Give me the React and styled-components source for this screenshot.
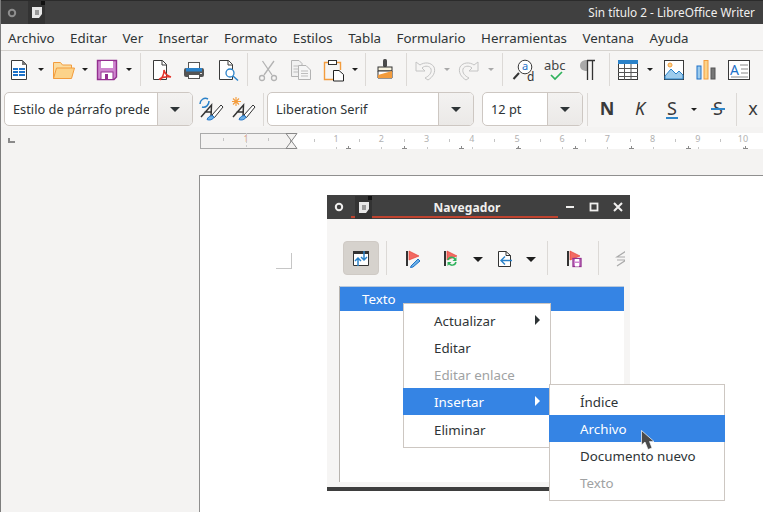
import React from "react";
import styled, { createGlobalStyle } from "styled-components";

const Global = createGlobalStyle`
  html, body { margin: 0; padding: 0; width: 763px; height: 512px; overflow: hidden; background: #f4f3f2; }
  * { box-sizing: border-box; }
  body { font-family: "Noto Sans", sans-serif; font-size: 13.33px; color: #2e3436; }
`;

const Win = styled.div`
  width: 763px; height: 512px; display: flex; flex-direction: column; overflow: hidden;
  border-left: 1px solid #7d7d7d; background: #f4f3f2;
`;
const TitleBar = styled.div`
  height: 24px; flex: none; background: #404040; border-top: 1px solid #2b2b2b;
  display: flex; align-items: center; color: #f0efee; margin-left: -1px;
`;
const TitleGear = styled.div` width: 28px; display: flex; justify-content: center; padding-right: 4px; `;
const Tile = styled.div`
  width: 17px; height: 23px; background: #333; display: flex; align-items: center; justify-content: center; position: relative;
  flex: none; z-index: 1; margin-left: ${p => p.$g || 0}px;
  &::after { content: ""; position: absolute; top: 0; right: 0; width: 4px; height: 4px; background: #111; }
`;
const TitleText = styled.div` margin-left: auto; padding: 0 8px 2px 0; white-space: nowrap; font-size: 11.8px; `;
const MenuBar = styled.div`
  height: 27px; flex: none; display: flex; align-items: center; padding: 1px 0 0 7px; gap: 15.45px;
  background: #f6f5f4; border-bottom: 1px solid #d5d2ce; color: #2e3436;
`;
const Toolbar = styled.div`
  height: 37px; flex: none; display: flex; align-items: center; background: #f6f5f4; padding-left: 6px;
`;
const Tool = styled.div`
  width: 24px; height: 24px; flex: none; margin-left: ${p => p.$g}px;
`;
const Arrow = styled.div`
  flex: none; width: 8px; height: 5px; margin-left: ${p => p.$g}px; margin-top: 2px; display: flex; justify-content: center;
  &::after {
    content: ""; flex: none;
    border-left: ${p => p.$s || 3}px solid transparent; border-right: ${p => p.$s || 3}px solid transparent;
    border-top: ${p => (p.$s || 3.5)}px solid ${p => (p.$off ? "#a9a9a9" : "#1e1e1e")};
  }
`;
const Sep = styled.div`
  flex: none; width: 1px; height: ${p => p.$h || 33}px; background: #dcd9d6; margin-left: ${p => p.$g}px;
`;
const FormatBar = styled.div`
  height: 39px; flex: none; display: flex; align-items: center; background: #f6f5f4; padding: 3px 0 0 3px;
`;
const Combo = styled.div`
  flex: none; width: ${p => p.$w}px; height: 34px; margin-left: ${p => p.$g || 0}px; display: flex;
  border: 1px solid #cdc7c2; border-radius: 5px; background: #fff; overflow: hidden;
`;
const ComboText = styled.div`
  flex: 1; min-width: 0; margin: 0 8px; line-height: 33px; font-size: 12.8px; color: #2e3436; overflow: hidden; white-space: nowrap;
`;
const ComboBtn = styled.div`
  flex: none; width: 35px; border-left: 1px solid #cdc7c2; background: linear-gradient(#f3f2f1, #ebe9e7);
  display: flex; align-items: center; justify-content: center;
  &::after { content: ""; border-left: 5px solid transparent; border-right: 5px solid transparent; border-top: 5px solid #2e3436; }
`;
const Letter = styled.div`
  flex: none; width: ${p => p.$w}px; margin-left: ${p => p.$g}px; text-align: center; font-size: 18px; line-height: 24px; color: #3a3a3a;
  font-weight: ${p => (p.$bold ? 700 : 400)}; font-style: ${p => (p.$it ? "italic" : "normal")};
  position: relative; top: -1px;
`;
const LetterLine = styled.span`
  position: absolute; left: ${p => p.$in}px; right: ${p => p.$in}px; top: ${p => p.$top}px; height: 1.5px; background: #2f86c9;
`;
const Workspace = styled.div`
  flex: 1; min-height: 0; display: flex; flex-direction: column; background: #f4f3f2;
`;
const RulerRow = styled.div`
  height: 22px; flex: none; padding-top: 6px; display: flex; align-items: flex-start;
`;
const RulerCorner = styled.div`
  width: 7px; height: 5px; margin: 5px 0 0 7px; border-left: 2px solid #8a8a8a; border-bottom: 2px solid #8a8a8a; flex: none;
`;
const RulerTrack = styled.div` margin-left: 185px; flex: none; height: 16px; `;
const Page = styled.div`
  flex: 1; margin: 26px 0 0 198px; background: #fff; border-top: 1px solid #8f8f8f; border-left: 1px solid #8f8f8f; position: relative;
`;
const MarginMark = styled.div`
  width: 16px; height: 16px; margin: 77px 0 0 76px; border-right: 1px solid #c6c6c6; border-bottom: 1px solid #c6c6c6;
`;
const NavWindow = styled.div`
  position: absolute; left: 127px; top: 19px; width: 303px; height: 296px; display: flex; flex-direction: column;
  background: #f6f5f4; border-bottom: 4px solid #3e3e3e;
`;
const NavTitle = styled.div`
  height: 24px; flex: none; background: #404040; display: flex; align-items: center; position: relative; color: #f0efee;
`;
const NavRed = styled.div`
  position: absolute; left: 24px; width: 207px; top: 21px; height: 2px; background: #c0432f;
`;
const NavGear = styled.div` width: 24px; display: flex; justify-content: center; `;
const NavCaption = styled.div`
  width: 136px; margin: 0 23px 0 27px; text-align: center; font-weight: 700; font-size: 12px; letter-spacing: 0.1px; padding-top: 1px;
`;
const NavBtn = styled.div` width: 24px; display: flex; justify-content: center; `;
const NavTools = styled.div`
  height: 67px; flex: none; display: flex; align-items: center; overflow: hidden; margin-right: 5px; padding: 11px 0 0 16px;
`;
const ActiveTool = styled.div`
  width: 36px; height: 34px; flex: none; border-radius: 4px; background: #d6d2cd; border: 1px solid #cfcac5;
  display: flex; align-items: center; justify-content: center;
`;
const Tree = styled.div`
  margin: 0 6px 0 12px; height: 196px; flex: none; background: #fff; border-left: 1px solid #b8b4af;
`;
const TreeRow = styled.div`
  height: 25px; background: #3584e4; color: #fff; padding-left: 22px; line-height: 25px; border-top: 1px solid #b9c9dc;
`;
const Popup = styled.div`
  position: absolute; left: ${p => p.$l}px; top: ${p => p.$t}px; width: ${p => p.$w}px; background: #fff;
  border: 1px solid #cdc7c2; padding: 3px 0 4px; z-index: 2;
`;
const Item = styled.div`
  height: ${p => p.$h || 27}px; line-height: ${p => (p.$h || 27) + 2}px; padding-left: 31px; margin: 0 -1px; position: relative; white-space: nowrap;
  background: ${p => (p.$active ? "#3584e4" : "transparent")};
  color: ${p => (p.$active ? "#fff" : p.$off ? "#a0a2a3" : "#2e3436")};
  &::after {
    content: ${p => (p.$sub ? '""' : "none")}; position: absolute; right: 11px; top: 8px;
    border-top: 5px solid transparent; border-bottom: 5px solid transparent;
    border-left: 5px solid ${p => (p.$active ? "#fff" : "#2e3436")};
  }
`;
const Cursor = styled.svg`
  position: absolute; left: 314px; top: 235px; z-index: 3;
`;
const IconSvg = styled.svg` display: block; overflow: visible; `;

const DocTile = () => (
  <svg width="10" height="11" viewBox="0 0 10 11"><path d="M0 0H10V7L7 11H0Z" fill="#e8e8e8" /><rect x="3" y="3" width="4" height="5" fill="#9a9a9a" /></svg>
);
const Gear = ({ c = "#8e8e8e" }) => (
  <svg width="10" height="10" viewBox="0 0 10 10"><circle cx="5" cy="5" r="3.2" fill="none" stroke={c} strokeWidth="2" /></svg>
);
const I = ({ children }) => <IconSvg width="24" height="24" viewBox="0 0 24 24">{children}</IconSvg>;

const NewDoc = () => <I><path d="M4.5 2.5H15.5L19.5 6.5V21.5H4.5Z" fill="#fff" stroke="#3a3a3a" /><path d="M15 2L20 7H15Z" fill="#777" /><path d="M6 10h5v2H6zM12 10h6v2h-6zM6 13h5v2H6zM12 13h6v2h-6zM6 16h5v2H6zM12 16h6v2h-6z" fill="#1c71c8" /></I>;
const Open = () => <I><path d="M2.5 20.5V4.5H9.5L11.5 7H20.5V10" fill="#fbdca0" stroke="#f39c3d" /><path d="M2.5 20.5L5.5 10H23.5L20.5 20.5Z" fill="#fcd38a" stroke="#f39c3d" /></I>;
const Save = () => <I><path d="M2.5 2.5H21.5V19L19 21.5H2.5Z" fill="#cf86cf" stroke="#93308f" strokeWidth="1.4" /><rect x="6" y="3" width="12" height="7" fill="#fff" /><rect x="6" y="14" width="12" height="7.5" fill="#fff" stroke="#93308f" /><rect x="10" y="16" width="3" height="5" fill="#93308f" /></I>;
const Pdf = () => <I><path d="M3.5 2.5H12.5L16.5 6.5V21.5H3.5Z" fill="#fff" stroke="#3a3a3a" /><path d="M12 2.5V7H16.5" fill="none" stroke="#3a3a3a" /><path d="M10 22C13 19 14 15 14 12C15 16 17 18 21 19C17 18.5 12 19 9 21.5" fill="none" stroke="#e5352b" strokeWidth="1.5" /></I>;
const Print = () => <I><rect x="6.5" y="4.5" width="11" height="7" fill="#fff" stroke="#555" /><rect x="2" y="10" width="20" height="9" rx="2" fill="#555" /><rect x="4" y="10" width="16" height="3.5" fill="#2b82c9" /><rect x="6.5" y="16.5" width="11" height="4" fill="#fff" stroke="#555" /><rect x="18" y="15" width="2" height="1" fill="#ddd" /></I>;
const Preview = () => <I><path d="M3.5 2.5H12.5L16.5 6.5V21.5H3.5Z" fill="#fff" stroke="#3a3a3a" /><path d="M12 2.5V7H16.5" fill="none" stroke="#3a3a3a" /><circle cx="14" cy="15" r="4" fill="#fff" stroke="#2b82c9" strokeWidth="1.3" /><path d="M17 18L22 22.5" stroke="#2b82c9" strokeWidth="1.5" /></I>;
const Cut = () => <I><g fill="none" stroke="#b3b3b3" strokeWidth="1.3"><path d="M6.5 3L16 17M18 3L8 17" /><circle cx="6" cy="20" r="2.5" /><circle cx="18" cy="20" r="2.5" /></g></I>;
const Copy = () => <I><path d="M2.5 2.5H10L13 5.5V18.5H2.5Z" fill="#f1f1f1" stroke="#b3b3b3" /><path d="M9.5 7.5H17L21.5 12V21.5H9.5Z" fill="#f6f6f6" stroke="#b3b3b3" /><path d="M4.5 8h5M4.5 11h5M4.5 14h5M12 13h7M12 15.5h7M12 18h7" stroke="#bdbdbd" /></I>;
const Paste = () => <I><path d="M7 4.5H3.5V21.5H12" fill="none" stroke="#f39c3d" strokeWidth="1.4" /><path d="M16 4.5H19.5V12" fill="none" stroke="#f39c3d" strokeWidth="1.4" /><rect x="7.5" y="2.5" width="8" height="4" fill="#fff" stroke="#333" /><path d="M12.5 12.5H18L22.5 16.5V23H12.5Z" fill="#fff" stroke="#222" /></I>;
const Brush = () => <I><rect x="10" y="1" width="4" height="8" rx="1.5" fill="#4a4a4a" /><rect x="5" y="9" width="14" height="4" fill="#f7f2df" stroke="#333" /><path d="M5 13H19V20H5Z" fill="#fff" stroke="#333" /><path d="M5 17L19 13V20H5Z" fill="#f39c3d" /></I>;
const Undo = ({ flip }) => <I><g transform={flip ? "translate(24 0) scale(-1 1)" : undefined}><path d="M3 4V13H12L9 10C12 7 17 8 18 11C19 15 16 18 12 20L15 22C20 19 23 14 21 9C18 4 11 4 7 7Z" fill="#f6f5f4" stroke="#c4c4c4" strokeLinejoin="round" /></g></I>;
const Find = () => <I><circle cx="13" cy="9" r="6.8" fill="#fff" stroke="#3a3a3a" /><path d="M7 15L1.5 21" stroke="#333" strokeWidth="2" /><text x="10" y="12" fontSize="11" fill="#1c71c8" fontFamily="Noto Sans">a</text><text x="15" y="23" fontSize="12" fill="#333" fontFamily="Noto Sans">d</text></I>;
const Spell = () => <I><text x="0" y="12" fontSize="13" fill="#444" fontFamily="Noto Sans">abc</text><path d="M7 17L11 21L18 14" fill="none" stroke="#2fb25c" strokeWidth="1.7" /></I>;
const Pilcrow = () => <I><path d="M11 2C6 2 4 4.5 4 7.5S6 13 11 13Z" fill="#a9a9a9" /><path d="M11.5 2V22M16.5 2V22M11 2.5H19" stroke="#333" strokeWidth="1.3" fill="none" /></I>;
const Table = () => <I><rect x="2.5" y="2.5" width="19" height="19" fill="#fff" stroke="#3a3a3a" /><rect x="2" y="2" width="20" height="4" fill="#2b82c9" /><path d="M2 10.5H22M2 14.5H22M2 18.5H22M8.5 6V22M15 6V22" stroke="#555" /></I>;
const Picture = () => <I><rect x="2.5" y="2.5" width="19" height="19" fill="#fff" stroke="#3a3a3a" /><circle cx="8" cy="7" r="2" fill="#fbd38a" stroke="#f39c3d" /><path d="M3 21V18L9 11L14 16L17 13L21 17V21Z" fill="#9dcbec" stroke="#2b82c9" /></I>;
const Chart = () => <I><rect x="3" y="8" width="4" height="13" fill="#9dcbec" stroke="#1c71c8" /><rect x="10" y="2.5" width="4" height="18.5" fill="#fcd38a" stroke="#f39c3d" /><rect x="17" y="10" width="4" height="11" fill="#777" stroke="#555" /></I>;
const TextBox = () => <I><rect x="1.5" y="2.5" width="21" height="19" fill="#fff" stroke="#3a3a3a" /><text x="3" y="17" fontSize="14" fill="#1c71c8" fontFamily="Noto Sans">A</text><path d="M13 7H21M14 11H21M14 15H21M4 19H21" stroke="#888" /></I>;
const StyleBase = ({ children }) => <I><path d="M2 20L12.5 8L12 20M5.5 15H13" fill="none" stroke="#333" strokeWidth="1.5" /><path d="M13 18L22 8L24 10L15.5 20.5Z" fill="#fff" stroke="#333" /><path d="M8 22.5C10 18 14 18 15 20C14 23 10 23.5 8 22.5Z" fill="#6cb0e6" stroke="#1c71c8" />{children}</I>;
const StyleUpdate = () => <StyleBase><path d="M1 7C1 3 5 0 9 2M10 4C10 8 7 11 3 10" fill="none" stroke="#2b82c9" strokeWidth="1.5" /></StyleBase>;
const StyleNew = () => <StyleBase><path d="M5 0V9M1 4.5H10M2 1.5L8 7.5M8 1.5L2 7.5" stroke="#f39c3d" strokeWidth="1.1" /></StyleBase>;

const NavSync = () => <I><path d="M4.5 5.5H19.5V19.5H4.5Z" fill="#fff" stroke="#333" /><rect x="4" y="5" width="16" height="3" fill="#333" /><path d="M9 20V12M6 15L9 12L12 15M15 5V14M12 11L15 14L18 11" fill="none" stroke="#2b82c9" strokeWidth="1.5" /></I>;
const Flag = ({ children }) => <I><rect x="5" y="5" width="2" height="15" fill="#333" /><path d="M8 5L18 10L8 14Z" fill="#f26a63" stroke="#e5352b" strokeWidth="0.6" />{children}</I>;
const FlagEdit = () => <Flag><path d="M10 20L17 13L19 15L12 21L9.5 21.5Z" fill="#6cb0e6" stroke="#1c71c8" /></Flag>;
const FlagSync = () => <Flag><path d="M9 14C10 10.5 15 10.5 16 13.5M17 16C16 20 11 20 10 17" fill="none" stroke="#2fb25c" strokeWidth="1.5" /><path d="M17.5 11V15H13.5Z M8.5 20V16H12.5Z" fill="#2fb25c" /></Flag>;
const FileBack = () => <I><path d="M5.5 5.5H13L17.5 9.5V20.5H5.5Z" fill="#fff" stroke="#333" /><path d="M13 5.5V9.5H17.5" fill="none" stroke="#333" /><path d="M19 14.5H8M12 10.500L8 14.5L12 18.500" fill="none" stroke="#2b82c9" strokeWidth="1.4" /></I>;
const FlagSave = () => <Flag><rect x="11" y="12.5" width="8" height="8" fill="#cf86cf" stroke="#93308f" strokeWidth="1.3" /><rect x="13" y="13" width="4" height="2.5" fill="#fff" /><rect x="13" y="17" width="4" height="3.5" fill="#fff" /></Flag>;
const Bolt = () => <I><path d="M17 5L8 11H17M8 14H17L8 20" fill="none" stroke="#aaa" strokeWidth="1.2" /></I>;

const Ruler = () => {
  const xs = Array.from({ length: 11 }, (_, i) => i);
  const unit = 45.2;
  const origin = 91;
  return (
    <svg width="563" height="16" viewBox="0 0 563 16" style={{ display: "block" }}>
      <rect x="0" y="0" width="563" height="16" fill="#fff" />
      <rect x="0.5" y="0.5" width="90" height="15" fill="#f4f3f2" stroke="#aaa" />
      <path d="M86 0.5H97L86 15.5H97Z" fill="#f4f3f2" stroke="#888" />
      {xs.map(i => {
        const x = origin + i * unit;
        return i === 0 ? null : (
          <g key={i}>
            <text x={x} y="9" fontSize="9" textAnchor="middle" fill="#b1b1b1" fontFamily="Noto Sans">{i}</text>
            <path d={`M${Math.round(x) + 0.5} 14V16`} stroke="#c8c8c8" />
          </g>
        );
      })}
      {xs.map(i => {
        const x = Math.round(origin + (i + 0.5) * unit) + 0.5;
        return <path key={i} d={`M${x} 6V9`} stroke="#c4c4c4" />;
      })}
      <path d="M23.5 5V8M68.5 5V8" stroke="#c4c4c4" />
      <text x="46" y="9" fontSize="9" textAnchor="middle" fill="#d8a08c" fontFamily="Noto Sans">1</text>
      <path d="M46.5 0V15" stroke="#ccc" strokeDasharray="2 2" />
      {[148, 204, 261, 318, 375, 431, 488, 545].map(x => (
        <path key={x} d={`M${x + 0.5} 13V16M${x - 2} 15.5H${x + 3}`} stroke="#8a8a8a" />
      ))}
    </svg>
  );
};

const menu = ["Archivo", "Editar", "Ver", "Insertar", "Formato", "Estilos", "Tabla", "Formulario", "Herramientas", "Ventana", "Ayuda"];

export default function App() {
  return (
    <Win>
      <Global />
      <TitleBar>
        <TitleGear><Gear /></TitleGear>
        <Tile><DocTile /></Tile>
        <TitleText>Sin título 2 - LibreOffice Writer</TitleText>
      </TitleBar>
      <MenuBar>{menu.map(m => <span key={m}>{m}</span>)}</MenuBar>
      <Toolbar>
        <Tool $g={0}><NewDoc /></Tool><Arrow $g={6} />
        <Tool $g={6}><Open /></Tool><Arrow $g={6} />
        <Tool $g={6}><Save /></Tool><Arrow $g={6} />
        <Sep $g={7} />
        <Tool $g={9}><Pdf /></Tool>
        <Tool $g={8}><Print /></Tool>
        <Tool $g={10}><Preview /></Tool>
        <Sep $g={7} />
        <Tool $g={8}><Cut /></Tool>
        <Tool $g={9}><Copy /></Tool>
        <Tool $g={8}><Paste /></Tool><Arrow $g={6} />
        <Sep $g={6} />
        <Tool $g={7}><Brush /></Tool>
        <Sep $g={9} />
        <Tool $g={6}><Undo /></Tool><Arrow $g={6} $off />
        <Tool $g={6}><Undo flip /></Tool><Arrow $g={6} $off />
        <Sep $g={7} />
        <Tool $g={9}><Find /></Tool>
        <Tool $g={8}><Spell /></Tool>
        <Tool $g={8}><Pilcrow /></Tool>
        <Sep $g={9} />
        <Tool $g={6}><Table /></Tool><Arrow $g={6} />
        <Tool $g={8}><Picture /></Tool>
        <Tool $g={8}><Chart /></Tool>
        <Tool $g={9}><TextBox /></Tool>
      </Toolbar>
      <FormatBar>
        <Combo $w={189}><ComboText>Estilo de párrafo predeterminado</ComboText><ComboBtn /></Combo>
        <Tool $g={6}><StyleUpdate /></Tool>
        <Tool $g={8}><StyleNew /></Tool>
        <Sep $g={8} />
        <Combo $w={207} $g={3}><ComboText>Liberation Serif</ComboText><ComboBtn /></Combo>
        <Combo $w={101} $g={8}><ComboText>12 pt</ComboText><ComboBtn /></Combo>
        <Sep $g={4} />
        <Letter $w={24} $g={7} $bold>N</Letter>
        <Letter $w={24} $g={9} $it>K</Letter>
        <Letter $w={24} $g={8}>S<LetterLine $top={21} $in={6} /></Letter>
        <Arrow $g={6} />
        <Letter $w={24} $g={8}>S<LetterLine $top={12} $in={5} /></Letter>
        <Sep $g={6} />
        <Letter $w={24} $g={4}>x</Letter>
      </FormatBar>
      <Workspace>
        <RulerRow>
          <RulerCorner />
          <RulerTrack><Ruler /></RulerTrack>
        </RulerRow>
        <Page>
          <MarginMark />
          <NavWindow>
            <NavTitle>
              <NavRed />
              <NavGear><Gear c="#f0efee" /></NavGear>
              <Tile $g={4}><DocTile /></Tile>
              <NavCaption>Navegador</NavCaption>
              <NavBtn><svg width="10" height="10" viewBox="0 0 10 10"><rect x="1" y="4" width="8" height="2" fill="#f0efee" /></svg></NavBtn>
              <NavBtn><svg width="10" height="10" viewBox="0 0 10 10"><rect x="1.5" y="1.5" width="7" height="7" fill="none" stroke="#f0efee" strokeWidth="1.8" /></svg></NavBtn>
              <NavBtn><svg width="10" height="10" viewBox="0 0 10 10"><path d="M1 1L9 9M9 1L1 9" stroke="#f0efee" strokeWidth="2" /></svg></NavBtn>
            </NavTitle>
            <NavTools>
              <ActiveTool><NavSync /></ActiveTool>
              <Sep $g={7} $h={34} />
              <Tool $g={14}><FlagEdit /></Tool>
              <Tool $g={14}><FlagSync /></Tool>
              <Arrow $g={11} $s={5} />
              <Tool $g={11}><FileBack /></Tool>
              <Arrow $g={10} $s={5} />
              <Sep $g={12} $h={34} />
              <Tool $g={14}><FlagSave /></Tool>
              <Sep $g={12} $h={34} />
              <Tool $g={10}><Bolt /></Tool>
            </NavTools>
            <Tree><TreeRow>Texto</TreeRow></Tree>
            <Popup $l={76} $t={108} $w={148}>
              <Item $sub>Actualizar</Item>
              <Item>Editar</Item>
              <Item $off>Editar enlace</Item>
              <Item $active $sub>Insertar</Item>
              <Item $h={28}>Eliminar</Item>
            </Popup>
            <Popup $l={222} $t={189} $w={176}>
              <Item>Índice</Item>
              <Item $active>Archivo</Item>
              <Item>Documento nuevo</Item>
              <Item $off>Texto</Item>
            </Popup>
            <Cursor width="14" height="22" viewBox="0 0 14 22">
              <path d="M0.5 0.5V15L4 12L7 19.5L11 18L8.5 11.5H13Z" fill="#4a4a4a" stroke="#fff" strokeWidth="0.7" />
            </Cursor>
          </NavWindow>
        </Page>
      </Workspace>
    </Win>
  );
}
